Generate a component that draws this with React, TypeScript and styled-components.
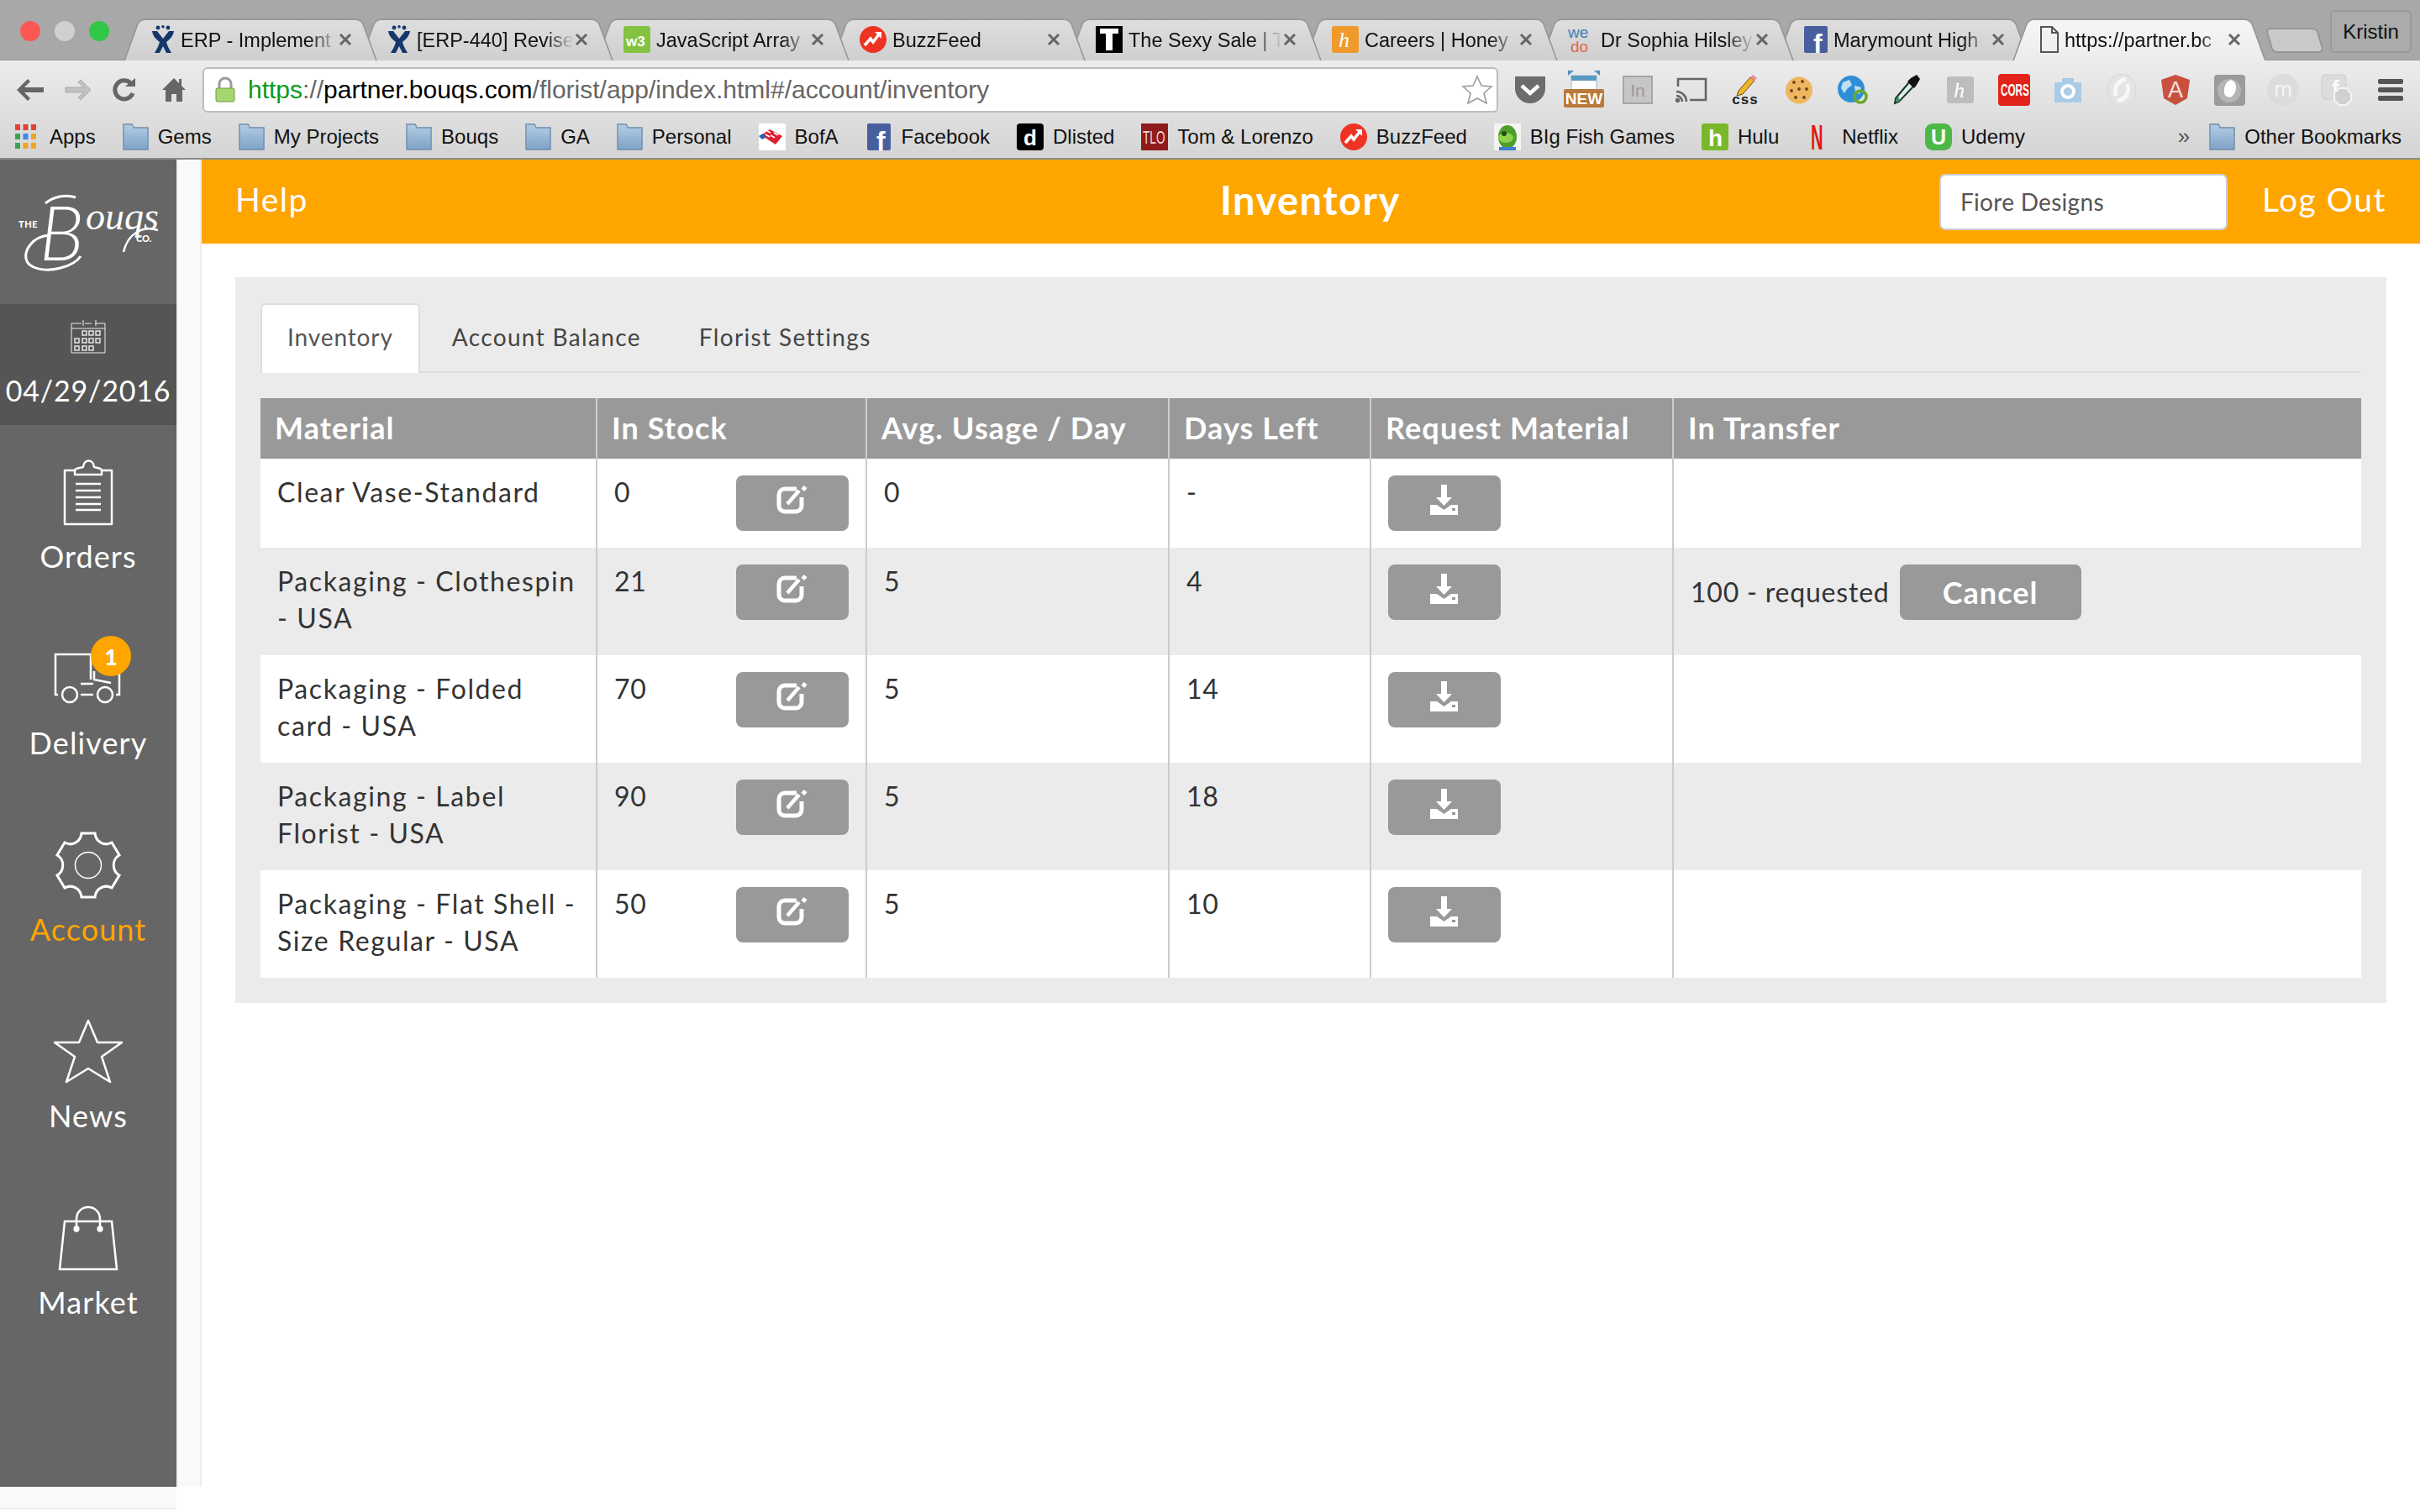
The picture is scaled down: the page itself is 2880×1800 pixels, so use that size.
import React from "react";
import styled, { createGlobalStyle } from "styled-components";

const GlobalStyle = createGlobalStyle`
  html, body { margin: 0; padding: 0; background: #fff; }
  * { box-sizing: border-box; }
  svg { overflow: visible; flex: none; }
`;

const ORANGE = "#ffa500";
const UI_FONT = `Lato, "Open Sans", sans-serif`;
const CHROME_FONT = `"Liberation Sans", Arial, sans-serif`;

const Page = styled.div`
  width: 2880px;
  height: 1800px;
  overflow: hidden;
  display: flex;
  flex-direction: column;
  font-family: ${UI_FONT};
`;

/* ---------- browser chrome ---------- */

const Browser = styled.div`
  height: 190px;
  flex: none;
  font-family: ${CHROME_FONT};
  border-bottom: 2px solid #8a8a8a;
  background: linear-gradient(#ececec 72px, #d4d4d4 100%);
`;

const TitleBar = styled.div`
  height: 72px;
  background: #a8a8a8;
  display: flex;
  align-items: flex-end;
  position: relative;
  border-bottom: 1px solid #999;
`;

const Lights = styled.div`
  width: 147px;
  height: 72px;
  flex: none;
  display: flex;
  gap: 17px;
  padding: 26px 0 0 24px;
`;

const Light = styled.span<{ $color: string }>`
  width: 24px;
  height: 24px;
  border-radius: 50%;
  background: ${(p) => p.$color};
`;

const Tab = styled.div<{ $active?: boolean; $z: number }>`
  position: relative;
  z-index: ${(p) => p.$z};
  width: 302px;
  height: 49px;
  flex: none;
  margin-right: -21px;
  padding: 0 30px 0 33px;
  display: flex;
  align-items: center;
  gap: 7px;
  font-size: 23.5px;
  color: #111;

  &::before,
  &::after {
    content: "";
    position: absolute;
    z-index: -1;
    top: 0;
    bottom: -1px;
    border: 2px solid #999;
    border-bottom: 0;
    background: ${(p) =>
      p.$active ? "linear-gradient(#f6f6f6, #ececec)" : "linear-gradient(#dedede, #cfcfcf)"};
  }
  &::before {
    left: 9px;
    right: 40%;
    border-right: 0;
    border-radius: 8px 0 0 0;
    transform: skewX(-20deg);
  }
  &::after {
    right: 9px;
    left: 40%;
    border-left: 0;
    border-radius: 0 8px 0 0;
    transform: skewX(20deg);
  }
`;

const TabTitle = styled.span`
  flex: 1;
  min-width: 0;
  padding-top: 3px;
  white-space: nowrap;
  -webkit-mask-image: linear-gradient(to right, #000 calc(100% - 34px), transparent);
  mask-image: linear-gradient(to right, #000 calc(100% - 34px), transparent);
`;

const TabClose = styled.span`
  flex: none;
  display: flex;
  margin-left: -6px;
`;

const NewTab = styled.div`
  position: absolute;
  left: 2700px;
  top: 33px;
  width: 62px;
  height: 30px;
  background: #c9c9c9;
  border: 2px solid #969696;
  border-radius: 6px 6px 6px 6px;
  transform: skewX(16deg);
`;

const ProfileButton = styled.div`
  position: absolute;
  left: 2773px;
  top: 12px;
  width: 97px;
  height: 51px;
  border: 2px solid #999;
  border-radius: 6px;
  background: #ababab;
  color: #111;
  font-size: 24px;
  display: flex;
  align-items: center;
  justify-content: center;
`;

const ToolBar = styled.div`
  height: 70px;
  display: flex;
  align-items: center;
`;

const NavButtons = styled.div`
  width: 241px;
  flex: none;
  display: flex;
  align-items: center;
  padding-left: 20px;
  gap: 25px;
`;

const Omnibox = styled.div`
  width: 1542px;
  height: 54px;
  flex: none;
  background: #fff;
  border: 2px solid #bdbdbd;
  border-radius: 6px;
  display: flex;
  align-items: center;
  padding: 0 5px 0 13px;
  gap: 15px;
  font-size: 30px;
`;

const Url = styled.div`
  flex: 1;
  white-space: nowrap;
  color: #666;
`;

const UrlScheme = styled.span`
  color: #0a9a1e;
`;

const UrlHost = styled.span`
  color: #000;
`;

const Extensions = styled.div`
  display: flex;
  padding-left: 6px;
`;

const Extension = styled.span`
  width: 64px;
  height: 50px;
  display: flex;
  align-items: center;
  justify-content: center;
`;

const Bookmarks = styled.div`
  height: 46px;
  padding: 0 22px 5px 18px;
  display: flex;
  align-items: center;
  gap: 32px;
  font-size: 24px;
  color: #111;
`;

const Bookmark = styled.span`
  display: flex;
  align-items: center;
  gap: 11px;
  white-space: nowrap;
`;

const Chevrons = styled.span`
  margin-left: auto;
  margin-right: -9px;
  font-size: 26px;
  color: #555;
`;

/* ---------- favicons and toolbar icons ---------- */

const FaceText = styled.text<{ $family?: string }>`
  font-family: ${(p) => p.$family || CHROME_FONT};
`;

const Jira = () => (
  <svg width="28" height="34" viewBox="0 0 28 34" fill="#14386b">
    <circle cx="8" cy="3" r="2.4" />
    <circle cx="14" cy="1.8" r="1.8" />
    <circle cx="20" cy="3" r="2.4" />
    <path d="M1 7h6l7 9 7-9h6c-1 6-5 10-9 13 1 5 4 9 6 13h-6l-4-8-4 8H4c2-4 5-8 6-13C6 17 2 13 1 7z" />
  </svg>
);
const W3 = () => (
  <svg width="32" height="32" viewBox="0 0 32 32">
    <rect width="32" height="32" rx="3" fill="#84c341" />
    <FaceText x="3" y="24" fontSize="17" fontWeight="700" fill="#fff">w3</FaceText>
  </svg>
);
const Buzz = () => (
  <svg width="32" height="32" viewBox="0 0 32 32">
    <circle cx="16" cy="16" r="16" fill="#ee3322" />
    <path d="M6 23l7-8 3 4 7-9" fill="none" stroke="#fff" strokeWidth="3.5" />
    <path d="M18 7h8v8z" fill="#fff" />
  </svg>
);
const SexyT = () => (
  <svg width="32" height="32" viewBox="0 0 32 32">
    <rect width="32" height="32" fill="#000" />
    <path d="M5 3h22v6h-7v20h-8V9H5z" fill="#fff" />
  </svg>
);
const Honey = ({ bg = "#f09a2c" }: { bg?: string }) => (
  <svg width="32" height="32" viewBox="0 0 32 32">
    <rect width="32" height="32" rx="3" fill={bg} />
    <FaceText x="8" y="25" fontSize="26" fontStyle="italic" fill="#fff" $family={`"Liberation Serif", serif`}>h</FaceText>
  </svg>
);
const WeDo = () => (
  <svg width="32" height="32" viewBox="0 0 32 32">
    <FaceText x="0" y="14" fontSize="19" fill="#3f7fb5">we</FaceText>
    <FaceText x="3" y="31" fontSize="19" fill="#e0664a">do</FaceText>
  </svg>
);
const Fb = ({ w = 28, h = 32 }: { w?: number; h?: number }) => (
  <svg width={w} height={h} viewBox="0 0 28 32">
    <rect width="28" height="32" rx="2" fill="#47609d" />
    <FaceText x="11" y="32" fontSize="32" fontWeight="700" fill="#fff">f</FaceText>
  </svg>
);
const FileIcon = () => (
  <svg width="22" height="32" viewBox="0 0 22 32" fill="none" stroke="#555" strokeWidth="2">
    <path d="M1 1h13l7 7v23H1z" />
    <path d="M14 1v7h7" />
  </svg>
);
const Cross = () => (
  <svg width="16" height="16" viewBox="0 0 16 16" stroke="#666" strokeWidth="3">
    <path d="M2 2l12 12M14 2L2 14" />
  </svg>
);

const Apps = () => (
  <svg width="30" height="30" viewBox="0 0 30 30">
    {["#e34133", "#e34133", "#e34133", "#3ca454", "#3f86f0", "#f2a420", "#3ca454", "#f2a420", "#f2a420"].map((c, i) => (
      <rect key={i} x={(i % 3) * 9.5} y={Math.floor(i / 3) * 11} width="6" height="7" fill={c} />
    ))}
  </svg>
);
const Folder = () => (
  <svg width="31" height="32" viewBox="0 0 33 32" preserveAspectRatio="none">
    <defs>
      <linearGradient id="folderFill" x1="0" y1="0" x2="0" y2="1">
        <stop offset="0" stopColor="#b5cde3" />
        <stop offset="1" stopColor="#7ea3c8" />
      </linearGradient>
    </defs>
    <path d="M1 1h11l2 4h18v26H1z" fill="url(#folderFill)" stroke="#6f8fae" strokeWidth="1.5" />
  </svg>
);
const Bofa = () => (
  <svg width="32" height="32" viewBox="0 0 32 32">
    <rect width="32" height="32" fill="#fff" />
    <path d="M3 14l10-7 15 8-8 10z" fill="#e01f2d" />
    <path d="M10 9l4 2M14 14l5 3M8 13l5 3M18 11l5 3" stroke="#fff" strokeWidth="1.6" />
    <path d="M0 15l5-3 4 4-5 3z" fill="#2d5fb3" />
  </svg>
);
const Dlisted = () => (
  <svg width="32" height="32" viewBox="0 0 32 32">
    <rect width="32" height="32" rx="4" fill="#000" />
    <FaceText x="8" y="26" fontSize="26" fontWeight="700" fill="#fff">d</FaceText>
  </svg>
);
const Tlo = () => (
  <svg width="32" height="32" viewBox="0 0 32 32">
    <rect width="32" height="32" fill="#8f1b1b" />
    <g transform="translate(2 24) scale(0.62 1)">
      <FaceText fontSize="22" fill="#f3d9d9">TLO</FaceText>
    </g>
  </svg>
);
const Fish = () => (
  <svg width="32" height="32" viewBox="0 0 32 32">
    <rect width="32" height="32" fill="#f4f4f4" />
    <ellipse cx="16" cy="16" rx="11" ry="14" fill="#4f9e2c" />
    <ellipse cx="14" cy="17" rx="9" ry="6" fill="#8fd14a" />
    <circle cx="12" cy="12" r="3" fill="#24491a" />
    <path d="M6 28h20v4H6z" fill="#3f7ed0" />
  </svg>
);
const Hulu = () => (
  <svg width="32" height="32" viewBox="0 0 32 32">
    <rect width="32" height="32" rx="3" fill="#78b82a" />
    <FaceText x="8" y="27" fontSize="28" fontWeight="700" fill="#fff">h</FaceText>
  </svg>
);
const Netflix = () => (
  <svg width="32" height="32" viewBox="0 0 32 32">
    <g transform="translate(6 31) scale(0.75 1.6)">
      <FaceText fontSize="27" fontWeight="700" fill="#e11a12">N</FaceText>
    </g>
  </svg>
);
const Udemy = () => (
  <svg width="32" height="32" viewBox="0 0 32 32">
    <rect width="32" height="32" rx="9" fill="#4db848" />
    <FaceText x="7" y="25" fontSize="25" fontWeight="700" fill="#fff">U</FaceText>
  </svg>
);

const Back = ({ color }: { color: string }) => (
  <svg width="32" height="26" viewBox="0 0 32 26" fill={color}>
    <path d="M13 0L0 13l13 13 3-3-7-7h23v-6H9l7-7z" />
  </svg>
);
const Forward = () => (
  <svg width="32" height="26" viewBox="0 0 32 26" fill="#c2c2c2" stroke="#aaa">
    <path d="M19 1l12 12-12 12-3-3 7-6H1v-6h22l-7-6z" />
  </svg>
);
const Reload = () => (
  <svg width="28" height="28" viewBox="0 0 28 28" fill="none">
    <path d="M22 6.5A11 11 0 1 0 24 18" stroke="#666" strokeWidth="5" />
    <path d="M15 10h12V0z" fill="#666" />
  </svg>
);
const Home = () => (
  <svg width="34" height="28" viewBox="-6 0 34 28" fill="#666">
    <path d="M14 0L0 14h4v14h7v-9h6v9h7V14h4l-5-5V1h-3v5z" />
  </svg>
);
const Lock = () => (
  <svg width="24" height="30" viewBox="0 0 24 30">
    <path d="M5 13V8a7 7 0 0 1 14 0v5" fill="none" stroke="#9c9c9c" strokeWidth="3" />
    <rect x="1" y="13" width="22" height="16" rx="2" fill="#a5d66f" stroke="#6f9c40" />
  </svg>
);
const StarOutline = () => (
  <svg width="36" height="34" viewBox="0 0 36 34" fill="#fff" stroke="#9a9a9a" strokeWidth="1.6">
    <path d="M18 1l5 11 12 1-9 8 3 12-11-6-11 6 3-12-9-8 12-1z" />
  </svg>
);

const Pocket = () => (
  <svg width="38" height="34" viewBox="0 0 38 34">
    <path d="M1 1h36v14a18 18 0 0 1-36 0z" fill="#6c6c6c" />
    <path d="M9 12l10 9 10-9" fill="none" stroke="#fff" strokeWidth="4.5" />
  </svg>
);
const NewBadge = () => (
  <svg width="50" height="46" viewBox="0 0 50 46">
    <path d="M6 0h7l-7 6zM44 0h-7l7 6z" fill="#4f92bd" />
    <rect x="10" y="6" width="30" height="26" fill="#fff" stroke="#9dbdd3" />
    <rect x="10" y="6" width="30" height="6" fill="#5a99c2" />
    <rect x="1" y="22" width="48" height="22" rx="2" fill="#b97a3c" />
    <FaceText x="25" y="40" fontSize="19" fontWeight="700" textAnchor="middle" fill="#fff">NEW</FaceText>
  </svg>
);
const LinkedIn = () => (
  <svg width="36" height="34" viewBox="0 0 36 34">
    <rect x="1" y="1" width="34" height="32" fill="#c6c6c6" stroke="#a6a6a6" strokeWidth="2" />
    <FaceText x="18" y="25" fontSize="21" textAnchor="middle" fill="#9a9a9a">In</FaceText>
  </svg>
);
const Cast = () => (
  <svg width="38" height="30" viewBox="0 0 38 30" fill="none" stroke="#666" strokeWidth="2.6">
    <path d="M3 11V2h33v25H17" />
    <path d="M1 17a12 12 0 0 1 12 12M1 22a7 7 0 0 1 7 7" />
    <circle cx="2.5" cy="27.5" r="1.4" fill="#666" />
  </svg>
);
const CssPencil = () => (
  <svg width="36" height="38" viewBox="0 0 36 38">
    <path d="M10 20l14-16 5 4-14 16-7 2z" fill="#f0b429" stroke="#6a5213" />
    <path d="M24 4l3-3 5 4-3 3z" fill="#ee8aa0" />
    <FaceText x="18" y="36" fontSize="17" fontWeight="700" letterSpacing="1" textAnchor="middle" fill="#222">css</FaceText>
  </svg>
);
const Cookie = () => (
  <svg width="34" height="33" viewBox="0 0 34 33">
    <circle cx="17" cy="16.5" r="16" fill="#eeb65f" />
    {[[11, 7], [21, 6], [8, 17], [17, 15], [26, 15], [13, 25], [23, 25]].map(([x, y]) => (
      <circle key={`${x}-${y}`} cx={x} cy={y} r="1.9" fill="#6b4423" />
    ))}
  </svg>
);
const Globe = () => (
  <svg width="36" height="34" viewBox="0 0 36 34">
    <circle cx="16" cy="16" r="16" fill="#2f8fd6" />
    <path d="M6 8l8-3 3 6-6 5-3 5-4-6zM20 12l8 2-2 8-5-2z" fill="#bfe0f2" />
    <circle cx="27" cy="25" r="7" fill="none" stroke="#69a92a" strokeWidth="3.6" />
  </svg>
);
const Dropper = () => (
  <svg width="34" height="36" viewBox="0 0 34 36">
    <path d="M20 9L4 28l-1 6 5-2 17-18z" fill="#dfeee6" stroke="#16392a" strokeWidth="2" />
    <path d="M7 25l-3 5 1 3 4-2z" fill="#3d8f66" />
    <path d="M18 8l8 8 3-4 4-7-4-5-7 4z" fill="#111" />
  </svg>
);
const Cors = () => (
  <svg width="38" height="38" viewBox="0 0 38 38">
    <rect width="38" height="38" rx="4" fill="#e2231a" />
    <g transform="translate(3 26) scale(0.56 1)">
      <FaceText fontSize="21" fontWeight="700" fill="#fff">CORS</FaceText>
    </g>
  </svg>
);
const Camera = () => (
  <svg width="34" height="31" viewBox="0 0 34 31">
    <path d="M1 6h9V1h14v5h9v24H1z" fill="#a9cbe6" />
    <circle cx="17" cy="17" r="7" fill="none" stroke="#fff" strokeWidth="4" />
  </svg>
);
const Swirl = () => (
  <svg width="38" height="38" viewBox="0 0 38 38">
    <ellipse cx="19" cy="19" rx="17" ry="19" fill="#e4e4e4" stroke="#d6d6d6" />
    <path d="M24 6c-9 2-15 9-12 20M14 32c9-2 15-9 12-20" stroke="#f8f8f8" strokeWidth="5" fill="none" />
  </svg>
);
const Angular = () => (
  <svg width="36" height="36" viewBox="0 0 36 36">
    <path d="M18 0l17 6-3 22-14 8-14-8L1 6z" fill="#c9503f" />
    <FaceText x="18" y="27" fontSize="27" textAnchor="middle" fill="#f4e3e0">A</FaceText>
  </svg>
);
const Shield = () => (
  <svg width="37" height="37" viewBox="0 0 37 37">
    <rect width="37" height="37" rx="4" fill="#9b9b9b" />
    <circle cx="18" cy="19" r="14" fill="#b5b5b5" />
    <path d="M20 6c8 3 8 14 1 20-3 2-8 0-9-4-1-7 2-14 8-16z" fill="#fff" />
  </svg>
);
const Medium = () => (
  <svg width="38" height="38" viewBox="0 0 38 38">
    <circle cx="19" cy="19" r="19" fill="#dcdcdc" />
    <FaceText x="19" y="27" fontSize="26" textAnchor="middle" fill="#f4f4f4">m</FaceText>
  </svg>
);
const FbBlock = () => (
  <svg width="38" height="38" viewBox="0 0 38 38">
    <rect x="1" y="1" width="29" height="29" rx="4" fill="#dcdcdc" stroke="#cfcfcf" />
    <FaceText x="13" y="26" fontSize="26" fontWeight="700" fill="#fafafa">f</FaceText>
    <path d="M22 17h8l6 6v8l-6 6h-8l-6-6v-8z" fill="#d0d0d0" stroke="#f4f4f4" strokeWidth="2" />
  </svg>
);
const Burger = () => (
  <svg width="30" height="26" viewBox="0 0 30 26" fill="#555">
    <rect width="30" height="6" rx="2" />
    <rect y="10" width="30" height="6" rx="2" />
    <rect y="20" width="30" height="6" rx="2" />
  </svg>
);

const tabs = [
  { key: "erp", title: "ERP - Implement", icon: <Jira /> },
  { key: "erp440", title: "[ERP-440] Revise", icon: <Jira /> },
  { key: "js", title: "JavaScript Array", icon: <W3 /> },
  { key: "buzz", title: "BuzzFeed", icon: <Buzz /> },
  { key: "sexy", title: "The Sexy Sale | T", icon: <SexyT /> },
  { key: "honey", title: "Careers | Honey", icon: <Honey /> },
  { key: "wedo", title: "Dr Sophia Hilsley", icon: <WeDo /> },
  { key: "mary", title: "Marymount High", icon: <Fb /> },
  { key: "partner", title: "https://partner.bc", icon: <FileIcon />, active: true },
];

const bookmarks = [
  { label: "Gems", icon: <Folder /> },
  { label: "My Projects", icon: <Folder /> },
  { label: "Bouqs", icon: <Folder /> },
  { label: "GA", icon: <Folder /> },
  { label: "Personal", icon: <Folder /> },
  { label: "BofA", icon: <Bofa /> },
  { label: "Facebook", icon: <Fb w={32} /> },
  { label: "Dlisted", icon: <Dlisted /> },
  { label: "Tom & Lorenzo", icon: <Tlo /> },
  { label: "BuzzFeed", icon: <Buzz /> },
  { label: "BIg Fish Games", icon: <Fish /> },
  { label: "Hulu", icon: <Hulu /> },
  { label: "Netflix", icon: <Netflix /> },
  { label: "Udemy", icon: <Udemy /> },
];

const extensions = [
  <Pocket />, <NewBadge />, <LinkedIn />, <Cast />, <CssPencil />, <Cookie />, <Globe />, <Dropper />,
  <Honey bg="#bdbdbd" />, <Cors />, <Camera />, <Swirl />, <Angular />, <Shield />, <Medium />, <FbBlock />, <Burger />,
];

/* ---------- app layout ---------- */

const AppBody = styled.div`
  flex: 1;
  display: flex;
  min-height: 0;
`;

const SideColumn = styled.div`
  width: 240px;
  flex: none;
  display: flex;
  flex-direction: column;
`;

const SideTop = styled.div`
  height: 1580px;
  flex: none;
  display: flex;
`;

const Sidebar = styled.nav`
  width: 210px;
  flex: none;
  background: #666;
  color: #fff;
  display: flex;
  flex-direction: column;
`;

const Gutter = styled.div`
  width: 30px;
  flex: none;
  background: #f9f9f9;
  border-left: 2px solid #eee;
  border-right: 2px solid #eee;
`;

const SideFoot = styled.div`
  width: 210px;
  height: 27px;
  background: #f9f9f9;
  border-bottom: 2px solid #eee;
`;

const LogoBox = styled.div`
  height: 172px;
  flex: none;
  display: flex;
  align-items: center;
  padding-left: 20px;
`;

const DateBox = styled.div`
  height: 144px;
  flex: none;
  background: #555;
  display: flex;
  flex-direction: column;
  align-items: center;
  padding-top: 18px;
`;

const DateText = styled.div`
  font-size: 34px;
  line-height: 44px;
  letter-spacing: 0.8px;
  margin-top: 22px;
`;

const NavItem = styled.div<{ $active?: boolean }>`
  height: 222px;
  flex: none;
  position: relative;
  display: flex;
  flex-direction: column;
  align-items: center;
  padding-top: 39px;
  color: ${(p) => (p.$active ? ORANGE : "#fff")};
`;

const NavIcon = styled.div`
  height: 82px;
  display: flex;
  align-items: center;
  justify-content: center;
`;

const NavLabel = styled.div`
  font-size: 36px;
  line-height: 44px;
  letter-spacing: 1.1px;
  margin-top: 13px;
`;

const Badge = styled.span`
  position: absolute;
  left: 108px;
  top: 29px;
  width: 48px;
  height: 48px;
  border-radius: 50%;
  background: ${ORANGE};
  color: #fff;
  font-size: 27px;
  font-weight: 900;
  display: flex;
  align-items: center;
  justify-content: center;
`;

const Main = styled.main`
  flex: 1;
  min-width: 0;
  background: #fff;
`;

const TopBar = styled.header`
  height: 100px;
  background: ${ORANGE};
  color: #fff;
  display: flex;
  align-items: center;
  padding: 0 40px;
`;

const TopLink = styled.span`
  font-size: 39px;
  letter-spacing: 1.5px;
  margin-bottom: 6px;
`;

const TopTitle = styled.h1`
  flex: 1;
  margin: 0 0 4px;
  padding-left: 444px;
  text-align: center;
  font-size: 47px;
  font-weight: 700;
  letter-spacing: 1.5px;
`;

const ShopSelect = styled.div`
  width: 343px;
  height: 67px;
  background: #fff;
  border: 2px solid #ccc;
  border-radius: 7px;
  color: #555;
  font-size: 28px;
  letter-spacing: 0.3px;
  display: flex;
  align-items: center;
  padding-left: 23px;
  margin-right: 41px;
`;

const Panel = styled.section`
  margin: 40px 40px 0;
  height: 864px;
  background: #ebebeb;
  padding: 31px 30px 30px;
`;

const TabBar = styled.div`
  height: 83px;
  display: flex;
  border-bottom: 2px solid #ddd;
  margin-bottom: 30px;
`;

const PanelTab = styled.div<{ $active?: boolean }>`
  height: 83px;
  padding: 0 30px 5px 30px;
  margin-right: ${(p) => (p.$active ? "6px" : "5px")};
  border: ${(p) => (p.$active ? "2px solid #ddd" : "2px solid transparent")};
  border-bottom: 0;
  border-radius: 6px 6px 0 0;
  background: ${(p) => (p.$active ? "#fff" : "transparent")};
  color: ${(p) => (p.$active ? "#555" : "#444")};
  font-size: 28px;
  letter-spacing: ${(p) => (p.$active ? "0.9px" : "1.35px")};
  display: flex;
  align-items: center;
`;

const Table = styled.table`
  width: 2500px;
  border-collapse: collapse;
  table-layout: fixed;
`;

const HeadCell = styled.th<{ $w: number }>`
  width: ${(p) => p.$w}px;
  height: 72px;
  padding: 0 0 3px 17px;
  background: #999;
  color: #fff;
  font-size: 36px;
  font-weight: 700;
  letter-spacing: 1.1px;
  text-align: left;
  border-left: 2px solid #ccc;
  &:first-child { border-left: 0; }
`;

const Row = styled.tr<{ $even?: boolean }>`
  background: ${(p) => (p.$even ? "#ebebeb" : "#fff")};
`;

const Cell = styled.td`
  padding: 20px;
  vertical-align: top;
  font-size: 32px;
  line-height: 44px;
  letter-spacing: 0.8px;
  color: #333;
  border-left: 2px solid #ccc;
  &:first-child { border-left: 0; }
`;

const CellText = styled.div`
  margin: -2px 0 2px;
`;

const MaterialName = styled(CellText)`
  letter-spacing: 1.6px;
`;

const StockCell = styled.div`
  display: flex;
  justify-content: space-between;
  align-items: flex-start;
`;

const TransferCell = styled.div`
  display: flex;
  align-items: center;
  gap: 12px;
`;

const ActionButton = styled.button`
  width: 134px;
  height: 66px;
  border: 0;
  padding: 0;
  border-radius: 8px;
  background: #999;
  display: block;
`;

const IconGlyph = styled.span`
  display: flex;
  align-items: center;
  justify-content: center;
  margin-bottom: 8px;
`;

const CancelButton = styled.button`
  width: 216px;
  height: 66px;
  border: 0;
  border-radius: 8px;
  background: #999;
  color: #fff;
  font-family: ${UI_FONT};
  font-size: 36px;
  font-weight: 700;
  letter-spacing: 1px;
`;

const EditIcon = () => (
  <svg width="38" height="36" viewBox="0 0 38 36" fill="none" stroke="#fff">
    <path d="M24 5H10a7 7 0 0 0-7 7v13a7 7 0 0 0 7 7h13a7 7 0 0 0 7-7V15" strokeWidth="5" />
    <path d="M13 23L27 7" strokeWidth="4.5" />
    <path d="M31 3l4 3" strokeWidth="5" />
  </svg>
);

const RequestIcon = () => (
  <svg width="34" height="36" viewBox="0 0 34 36">
    <path d="M13 0h7v15h6l-9.500 10L7 15h6z" fill="#fff" />
    <path d="M0 24h8l8.500 6 8.500-6h8v12H0z" fill="#fff" />
    <rect x="26" y="28" width="4" height="3" fill="#999" />
  </svg>
);

const BouqsText = styled.text<{ $serif?: boolean }>`
  font-family: ${(p) => (p.$serif ? `"Liberation Serif", serif` : `Lato, sans-serif`)};
`;

const BouqsLogo = () => (
  <svg width="172" height="96" viewBox="0 0 172 96" fill="none">
    <BouqsText x="2" y="43" fontSize="11" fontWeight="900" fill="#fff" letterSpacing="0.5">THE</BouqsText>
    <BouqsText x="27" y="82" fontSize="90" fontWeight="300" fontStyle="italic" fill="#fff">B</BouqsText>
    <BouqsText x="82" y="45" fontSize="46" fontStyle="italic" fill="#fff" $serif>ouqs</BouqsText>
    <path d="M38 52C18 54 9 70 11 80c2 12 23 16 41 11 12-3 20-8 24-14" stroke="#fff" strokeWidth="3" />
    <path d="M34 14C44 6 58 3 70 7" stroke="#fff" strokeWidth="3" />
    <path d="M127 72c5-22 23-32 41-26" stroke="#fff" strokeWidth="2.500" />
    <BouqsText x="142" y="60" fontSize="11" fontWeight="900" fill="#fff">CO.</BouqsText>
  </svg>
);

const CalendarIcon = () => (
  <svg width="42" height="41" viewBox="0 0 42 41" fill="none" stroke="#eee" strokeWidth="1">
    <path d="M1 5h12M17 5h8M29 5h12v35H1V5M1 11h40M15 1v7M30 1v7" />
    {[[14, 14], [22, 14], [30, 14], [5, 23], [14, 23], [22, 23], [30, 23], [5, 32], [14, 32], [22, 32]].map(([x, y]) => (
      <rect key={`${x}-${y}`} x={x} y={y} width="5" height="5" strokeWidth="1.4" />
    ))}
  </svg>
);

const ClipboardIcon = () => (
  <svg width="60" height="80" viewBox="0 0 60 80" fill="none" stroke="#fff" strokeWidth="2.500" strokeLinejoin="round">
    <path d="M14 14H2v64h56V14H46" />
    <path d="M14 19v-5c0-3 8-3 10-4 1-10 12-10 13 0 2 1 9 1 9 4v5z" />
    <path d="M15 30h30M15 38h30M15 46h30M15 54h30M15 61h30" />
  </svg>
);

const TruckIcon = () => (
  <svg width="82" height="62" viewBox="0 0 82 62" fill="none" stroke="#fff" strokeWidth="2.500">
    <path d="M5 50H2V2h42v30M48 22v10l20 4M78 24v26h-4" />
    <circle cx="19" cy="50" r="9" />
    <circle cx="61" cy="50" r="9" />
    <path d="M32 37h15M32 50h15" />
  </svg>
);

const GearIcon = () => (
  <svg width="78" height="80" viewBox="0 0 78 80" fill="none" stroke="#fff">
    <path
      d="M31 2h16c1 10 11 16 20 11l9 15c-9 5-9 19 0 24l-9 15c-9-5-19 1-20 11H31c-1-10-11-16-20-11L2 52c9-5 9-19 0-24l9-15c9 5 19-1 20-11z"
      strokeWidth="3"
    />
    <circle cx="39" cy="40" r="15.500" strokeWidth="1.500" />
  </svg>
);

const StarIcon = () => (
  <svg width="82" height="78" viewBox="0 0 82 78" fill="none" stroke="#fff" strokeWidth="2.500" strokeLinejoin="round">
    <path d="M41 2l11 26 29 0-24 17 10 30-26-16-26 16 10-30L1 28l29 0z" />
  </svg>
);

const BagIcon = () => (
  <svg width="70" height="78" viewBox="0 0 70 78" fill="none" stroke="#fff" strokeWidth="2.500">
    <path d="M7 19h56l6 57H1z" />
    <path d="M21 27V16a14 14 0 0 1 28 0v11" />
    <circle cx="21" cy="28" r="2.400" fill="#fff" />
    <circle cx="49" cy="28" r="2.400" fill="#fff" />
  </svg>
);

const navItems = [
  { label: "Orders", icon: <ClipboardIcon /> },
  { label: "Delivery", icon: <TruckIcon />, badge: 1 },
  { label: "Account", icon: <GearIcon />, active: true },
  { label: "News", icon: <StarIcon /> },
  { label: "Market", icon: <BagIcon /> },
];

const columns = [
  { title: "Material", w: 400 },
  { title: "In Stock", w: 321 },
  { title: "Avg. Usage / Day", w: 360 },
  { title: "Days Left", w: 240 },
  { title: "Request Material", w: 360 },
  { title: "In Transfer", w: 819 },
];

const rows = [
  { name: "Clear Vase-Standard", stock: "0", usage: "0", days: "-" },
  { name: "Packaging - Clothespin - USA", stock: "21", usage: "5", days: "4", transfer: "100 - requested" },
  { name: "Packaging - Folded card - USA", stock: "70", usage: "5", days: "14" },
  { name: "Packaging - Label Florist - USA", stock: "90", usage: "5", days: "18" },
  { name: "Packaging - Flat Shell - Size Regular - USA", stock: "50", usage: "5", days: "10" },
];

export default function App() {
  return (
    <Page>
      <GlobalStyle />
      <Browser>
        <TitleBar>
          <Lights>
            <Light $color="#fc5753" />
            <Light $color="#d0d0d0" />
            <Light $color="#33c748" />
          </Lights>
          {tabs.map((tab, i) => (
            <Tab key={tab.key} $active={tab.active} $z={tab.active ? 20 : 10 - i}>
              {tab.icon}
              <TabTitle>{tab.title}</TabTitle>
              <TabClose><Cross /></TabClose>
            </Tab>
          ))}
          <NewTab />
          <ProfileButton>Kristin</ProfileButton>
        </TitleBar>
        <ToolBar>
          <NavButtons>
            <Back color="#666" />
            <Forward />
            <Reload />
            <Home />
          </NavButtons>
          <Omnibox>
            <Lock />
            <Url>
              <UrlScheme>https</UrlScheme>://<UrlHost>partner.bouqs.com</UrlHost>/florist/app/index.html#/account/inventory
            </Url>
            <StarOutline />
          </Omnibox>
          <Extensions>
            {extensions.map((icon, i) => (
              <Extension key={i}>{icon}</Extension>
            ))}
          </Extensions>
        </ToolBar>
        <Bookmarks>
          <Bookmark><Apps />Apps</Bookmark>
          {bookmarks.map((b) => (
            <Bookmark key={b.label}>{b.icon}{b.label}</Bookmark>
          ))}
          <Chevrons>»</Chevrons>
          <Bookmark><Folder />Other Bookmarks</Bookmark>
        </Bookmarks>
      </Browser>

      <AppBody>
        <SideColumn>
          <SideTop>
            <Sidebar>
              <LogoBox><BouqsLogo /></LogoBox>
              <DateBox>
                <CalendarIcon />
                <DateText>04/29/2016</DateText>
              </DateBox>
              {navItems.map((item) => (
                <NavItem key={item.label} $active={item.active}>
                  <NavIcon>{item.icon}</NavIcon>
                  <NavLabel>{item.label}</NavLabel>
                  {item.badge && <Badge>{item.badge}</Badge>}
                </NavItem>
              ))}
            </Sidebar>
            <Gutter />
          </SideTop>
          <SideFoot />
        </SideColumn>

        <Main>
          <TopBar>
            <TopLink>Help</TopLink>
            <TopTitle>Inventory</TopTitle>
            <ShopSelect>Fiore Designs</ShopSelect>
            <TopLink>Log Out</TopLink>
          </TopBar>
          <Panel>
            <TabBar>
              <PanelTab $active>Inventory</PanelTab>
              <PanelTab>Account Balance</PanelTab>
              <PanelTab>Florist Settings</PanelTab>
            </TabBar>
            <Table>
              <thead>
                <tr>
                  {columns.map((c) => (
                    <HeadCell key={c.title} $w={c.w}>{c.title}</HeadCell>
                  ))}
                </tr>
              </thead>
              <tbody>
                {rows.map((row, i) => (
                  <Row key={row.name} $even={i % 2 === 1}>
                    <Cell><MaterialName>{row.name}</MaterialName></Cell>
                    <Cell>
                      <StockCell>
                        <CellText>{row.stock}</CellText>
                        <ActionButton><IconGlyph><EditIcon /></IconGlyph></ActionButton>
                      </StockCell>
                    </Cell>
                    <Cell><CellText>{row.usage}</CellText></Cell>
                    <Cell><CellText>{row.days}</CellText></Cell>
                    <Cell>
                      <ActionButton><IconGlyph><RequestIcon /></IconGlyph></ActionButton>
                    </Cell>
                    <Cell>
                      {row.transfer && (
                        <TransferCell>
                          {row.transfer}
                          <CancelButton>Cancel</CancelButton>
                        </TransferCell>
                      )}
                    </Cell>
                  </Row>
                ))}
              </tbody>
            </Table>
          </Panel>
        </Main>
      </AppBody>
    </Page>
  );
}
